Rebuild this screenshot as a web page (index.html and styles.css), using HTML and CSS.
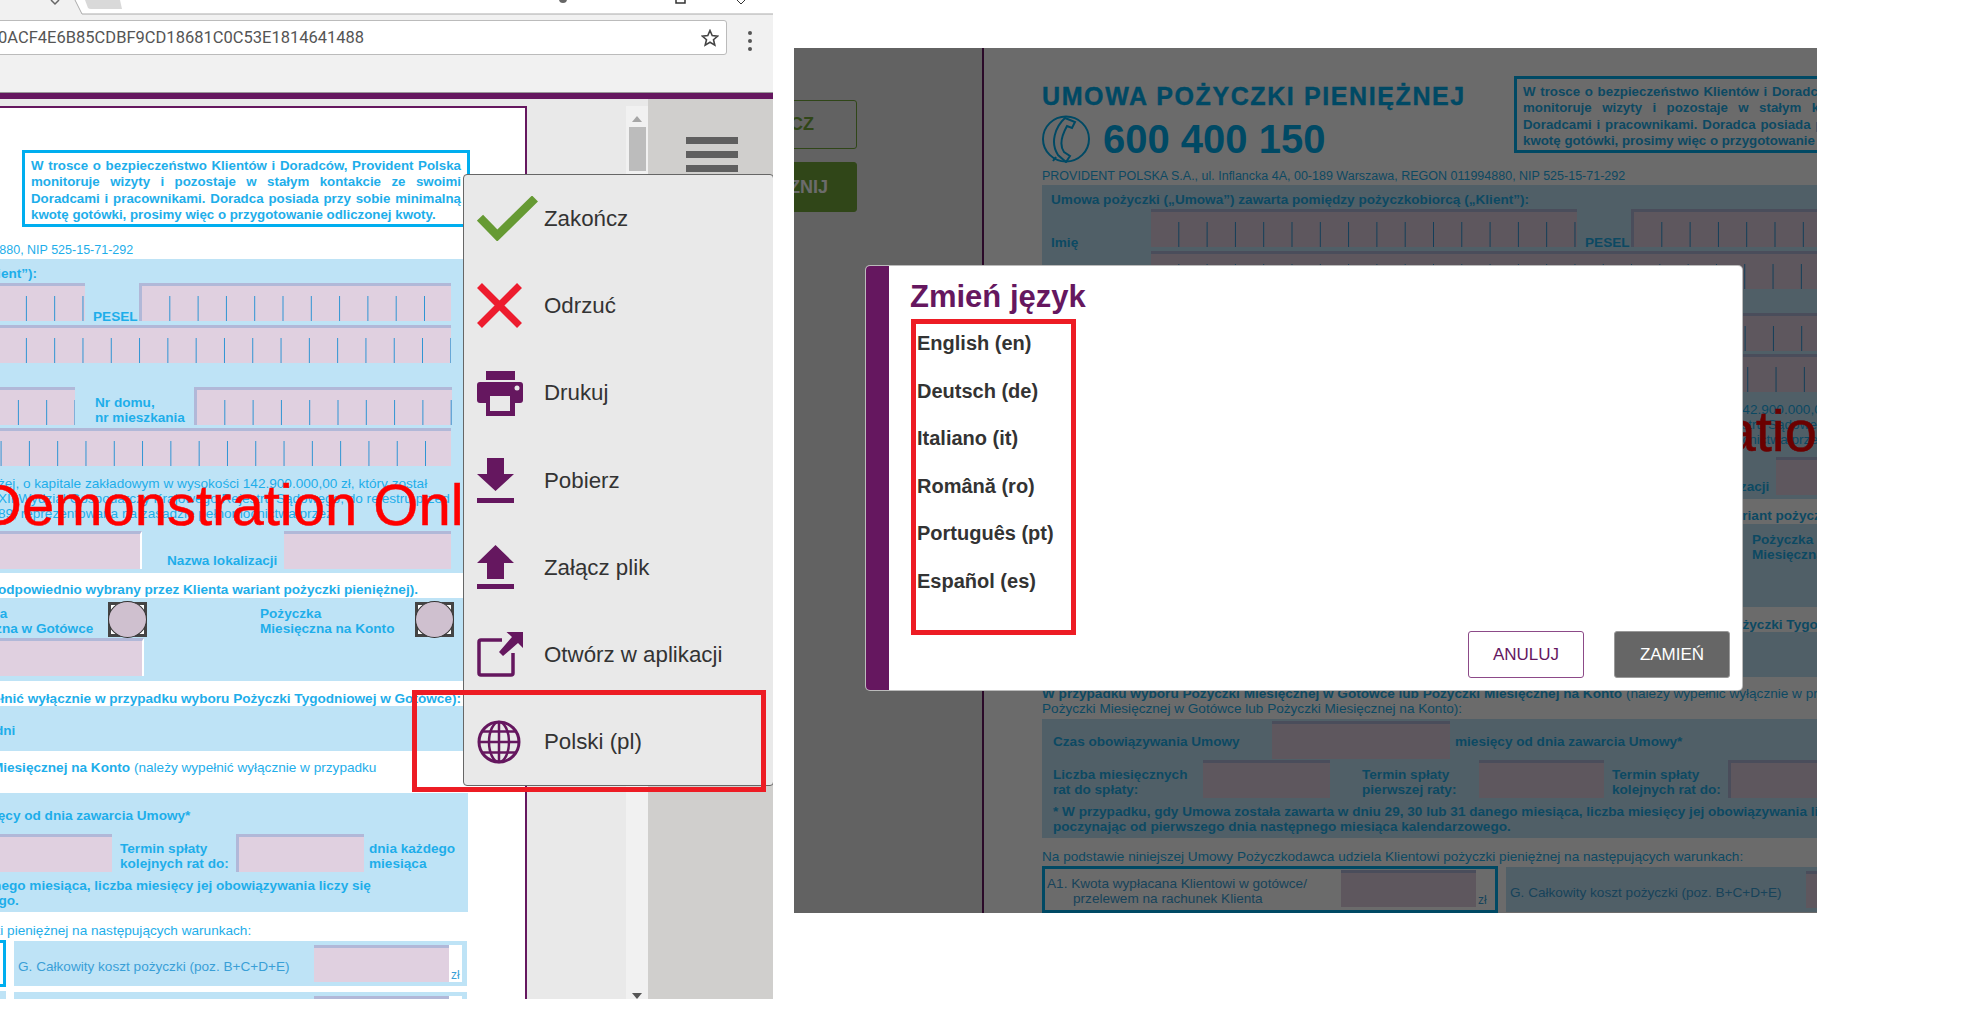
FILE: index.html
```html
<!DOCTYPE html>
<html lang="pl">
  <head>
    <meta charset="UTF-8" />
    <meta name="viewport" content="width=device-width, initial-scale=1.0" />
    <title>Zmień język</title>
    <link rel="stylesheet" href="styles.css">
  </head>

  <body>
    <div class="pane pane-left">
      <svg class="tabstrip" width="773" height="15" viewBox="0 0 773 15">
        <path d="M75 0 L82 14 H773 V0 Z" fill="#fff" />
        <path d="M75 0 L82 14 H773" fill="none" stroke="#aaa" />
        <path d="M85 0 L88 8 Q89 9 91 9 H122 L120 0 Z" fill="#d9d9d9" />
        <path d="M51 0 L55 4 L59 0" fill="none" stroke="#666" stroke-width="1.5" />
        <circle cx="563" cy="-1" r="4" fill="#666" />
        <path d="M676 0 V3 H685 V0" fill="none" stroke="#333" stroke-width="1.5" />
        <path d="M737 0 L741 4 L745 0" fill="none" stroke="#333" />
      </svg>
      <div class="toolbar">
        <div class="address">
          <span class="url">0ACF4E6B85CDBF9CD18681C0C53E1814641488</span>
          <svg class="star" width="18" height="18" viewBox="0 0 18 18">
            <path d="M9 1.5 L11.2 6.6 L16.7 7.1 L12.5 10.7 L13.8 16.1 L9 13.3 L4.2 16.1 L5.5 10.7 L1.3 7.1 L6.8 6.6 Z" fill="none" stroke="#444" stroke-width="1.6" />
          </svg>
        </div>
        <div class="dots"><i></i><i></i><i></i></div>
      </div>
      <div class="stage">
        <div class="viewer">
          <div class="sidebar">
            <button class="side-btn">ZAKOŃCZ</button>
            <button class="side-btn side-btn-solid">ROZPOCZNIJ</button>
          </div>
          <div class="paper">
            <div class="doc-head">
              <div class="doc-brand">
                <h1 class="doc-title">UMOWA POŻYCZKI PIENIĘŻNEJ</h1>
                <div class="doc-phone">
                  <svg width="48" height="48" viewBox="0 0 48 48">
                    <ellipse cx="24" cy="24" rx="23" ry="22.5" fill="none" stroke="#00aeef" stroke-width="2" />
                    <path d="M23 3 L33 7 L30 13 L25 11 C20 20 17 30 22 37 L28 41 L24 47 L16 40 C8 28 13 12 23 3 Z" fill="none" stroke="#00aeef" stroke-width="2" />
                    <path d="M14 42 L11 46" stroke="#00aeef" stroke-width="2" />
                  </svg>
                  <span>600 400 150</span>
                </div>
              </div>
              <div class="notice">
                <span class="jl">W trosce o bezpieczeństwo Klientów i Doradców, Provident Polska</span>
                <span class="jl">monitoruje wizyty i pozostaje w stałym kontakcie ze swoimi</span>
                <span class="jl">Doradcami i pracownikami. Doradca posiada przy sobie minimalną</span>
                <span>kwotę gotówki, prosimy więc o przygotowanie odliczonej kwoty.</span>
              </div>
            </div>
            <p class="address-line">PROVIDENT POLSKA S.A., ul. Inflancka 4A, 00-189 Warszawa, REGON 011994880, NIP 525-15-71-292</p>

            <div class="block block-parties">
              <p class="b block-title">Umowa pożyczki („Umowa”) zawarta pomiędzy pożyczkobiorcą („Klient”):</p>
              <div class="row row-1">
                <span class="b lbl w-imie">Imię</span>
                <div class="field ticks w-imie-f"></div>
                <span class="b lbl w-pesel">PESEL</span>
                <div class="field ticks bordered w-pesel-f"></div>
              </div>
              <div class="row row-2">
                <div class="field ticks w-full"></div>
              </div>
              <div class="row row-3">
                <div class="field ticks w-street"></div>
                <span class="b lbl2 w-nr">Nr domu,<br>nr mieszkania</span>
                <div class="field ticks bordered w-nr-f"></div>
              </div>
              <div class="row row-4">
                <div class="field ticks shift w-full"></div>
              </div>
              <p class="para para-company">
                <span>żej, o kapitale zakładowym w wysokości 142.900.000,00 zł, który został</span>
                <span>XII Wydział Gospodarczy Krajowego Rejestru Sądowego, do rejestru przed</span>
                <span>89, reprezentowana na zasadzie pełnomocnictwa przez</span>
              </p>
              <div class="row row-5">
                <div class="field w-place"></div>
                <span class="b lbl w-place-l">Nazwa lokalizacji</span>
                <div class="field w-place-f"></div>
              </div>
            </div>

            <p class="b band band-choice">odpowiednio wybrany przez Klienta wariant pożyczki pieniężnej).</p>

            <div class="block block-choice">
              <div class="choice-row">
                <span class="b lbl2 w-loan1">Pożyczka<br>Miesięczna w Gotówce</span>
                <div class="check"><i></i></div>
                <span class="b lbl2 w-loan2">Pożyczka<br>Miesięczna na Konto</span>
                <div class="check"><i></i></div>
              </div>
              <div class="field w-amount"></div>
            </div>

            <p class="b band band-weekly">Należy wypełnić wyłącznie w przypadku wyboru Pożyczki Tygodniowej w Gotówce):</p>
            <div class="block block-weekly"><span class="b">dni</span></div>

            <div class="monthly-note">
              <p><b>W przypadku wyboru Pożyczki Miesięcznej w Gotówce lub Pożyczki Miesięcznej na Konto</b> (należy wypełnić wyłącznie w przypadku</p>
              <p>Pożyczki Miesięcznej w Gotówce lub Pożyczki Miesięcznej na Konto):</p>
            </div>

            <div class="block block-monthly">
              <div class="row row-term">
                <span class="b lbl-c w-term">Czas obowiązywania Umowy</span>
                <div class="field w-term-f"></div>
                <span class="b lbl-c">miesięcy od dnia zawarcia Umowy*</span>
              </div>
              <div class="row row-rates">
                <span class="b lbl2 w-rates">Liczba miesięcznych<br>rat do spłaty:</span>
                <div class="field w-rates-f"></div>
                <span class="b lbl2 w-first">Termin spłaty<br>pierwszej raty:</span>
                <div class="field w-first-f"></div>
                <span class="b lbl2 w-next">Termin spłaty<br>kolejnych rat do:</span>
                <div class="field bordered w-next-f"></div>
                <span class="b lbl2">dnia każdego<br>miesiąca</span>
              </div>
              <p class="b footnote">* W przypadku, gdy Umowa została zawarta w dniu 29, 30 lub 31 danego miesiąca, liczba miesięcy jej obowiązywania liczy się<br>poczynając od pierwszego dnia następnego miesiąca kalendarzowego.</p>
            </div>

            <p class="terms-intro">Na podstawie niniejszej Umowy Pożyczkodawca udziela Klientowi pożyczki pieniężnej na następujących warunkach:</p>

            <div class="terms-row">
              <div class="term term-main">
                <p class="term-text">A1. Kwota wypłacana Klientowi w gotówce/<br><span class="term-indent">przelewem na rachunek Klienta</span></p>
                <div class="money"><div class="field"></div><span>zł</span></div>
              </div>
              <div class="term term-g">
                <p class="term-text">G. Całkowity koszt pożyczki (poz. B+C+D+E)</p>
                <div class="money"><div class="field"></div><span>zł</span></div>
              </div>
            </div>
            <div class="terms-row">
              <div class="term term-plain"></div>
              <div class="term term-g">
                <div class="money"><div class="field"></div><span>zł</span></div>
              </div>
            </div>

            <div class="watermark">Demonstration Only</div>
          </div>
          <div class="gutter"></div>
          <div class="scrollbar">
            <i class="arrow-up"></i>
            <div class="thumb"></div>
            <i class="arrow-down"></i>
          </div>
          <div class="sidepanel">
            <div class="burger"><i></i><i></i><i></i></div>
          </div>
        </div>
      </div>

      <ul class="menu">
        <li>
          <span class="menu-icon">
            <svg width="61" height="45" viewBox="0 0 61 45"><path d="M3 21.7 L20.3 39.5 L58 2.5" fill="none" stroke="#669a33" stroke-width="8.5" /></svg>
          </span>
          Zakończ
        </li>
        <li>
          <span class="menu-icon">
            <svg width="45" height="45" viewBox="0 0 45 45"><path d="M2.5 2.5 L42.5 42.5 M42.5 2.5 L2.5 42.5" fill="none" stroke="#ed1c2e" stroke-width="7" /></svg>
          </span>
          Odrzuć
        </li>
        <li>
          <span class="menu-icon">
            <svg width="46" height="45" viewBox="0 0 46 45">
              <rect x="9" y="0" width="29" height="9" fill="#65175f" />
              <rect x="0" y="11" width="46" height="21" rx="3" fill="#65175f" />
              <rect x="9" y="25" width="29" height="20" fill="#65175f" />
              <rect x="13" y="25" width="20" height="15" fill="#e9e9e9" />
              <circle cx="40" cy="17" r="2.5" fill="#e9e9e9" />
            </svg>
          </span>
          Drukuj
        </li>
        <li>
          <span class="menu-icon">
            <svg width="37" height="45" viewBox="0 0 37 45">
              <path d="M10 0 H27 V16 H37 L18.5 33 L0 16 H10 Z" fill="#65175f" />
              <rect x="0" y="40" width="37" height="5" fill="#65175f" />
            </svg>
          </span>
          Pobierz
        </li>
        <li>
          <span class="menu-icon">
            <svg width="37" height="45" viewBox="0 0 37 45">
              <path d="M18.5 0 L37 18 H27 V34 H10 V18 H0 Z" fill="#65175f" />
              <rect x="0" y="39" width="37" height="5" fill="#65175f" />
            </svg>
          </span>
          Załącz plik
        </li>
        <li>
          <span class="menu-icon">
            <svg width="46" height="46" viewBox="0 0 46 46">
              <path d="M25 8 H4 Q2 8 2 10 V41 Q2 43 4 43 H34 Q36 43 36 41 V21" fill="none" stroke="#65175f" stroke-width="3.5" />
              <path d="M29.5 0 H46 V16 L41 11 L26 24 L22 20 L35 5 Z" fill="#65175f" />
            </svg>
          </span>
          Otwórz w aplikacji
        </li>
        <li>
          <span class="menu-icon">
            <svg width="44" height="44" viewBox="0 0 44 44">
              <g fill="none" stroke="#65175f">
                <circle cx="22" cy="22" r="20" stroke-width="3" />
                <ellipse cx="22" cy="22" rx="10" ry="20" stroke-width="2.5" />
                <path d="M22 2 V42 M5 11.5 H39 M2 22 H42 M5 32.5 H39" stroke-width="2.5" />
              </g>
            </svg>
          </span>
          Polski (pl)
        </li>
      </ul>
      <div class="mark mark-lang"></div>
    </div>

    <div class="pane pane-right">
      <div class="dim"></div>
      <div class="modal">
        <div class="modal-strip"></div>
        <div class="modal-body">
          <h2 class="modal-title">Zmień język</h2>
          <ul class="lang-list">
            <li>English (en)</li>
            <li>Deutsch (de)</li>
            <li>Italiano (it)</li>
            <li>Română (ro)</li>
            <li>Português (pt)</li>
            <li>Español (es)</li>
          </ul>
          <div class="modal-actions">
            <button class="btn btn-cancel">ANULUJ</button>
            <button class="btn btn-ok">ZAMIEŃ</button>
          </div>
          <div class="mark mark-list"></div>
        </div>
      </div>
    </div>

    <script src="page.js"></script>
  </body>
</html>
```

FILE: styles.css
```css
* {
  box-sizing: border-box;
}

body {
  margin: 0;
  display: flex;
  gap: 21px;
  height: 1026px;
  overflow: hidden;
  background: #fff;
  font-family: "Liberation Sans", Arial, sans-serif;
  color: #333;
}

p,
h1,
h2,
ul {
  margin: 0;
  padding: 0;
}

.pane {
  position: relative;
  overflow: hidden;
  flex: none;
}

.pane-left {
  width: 773px;
  height: 999px;
  display: flex;
  flex-direction: column;
}

.pane-right {
  width: 1023px;
  height: 865px;
  margin-top: 48px;
}

.pane-right .viewer {
  margin-top: -23px;
}

.pane-left .viewer {
  margin-left: -698px;
}

/* browser chrome */
.tabstrip {
  display: block;
  flex: none;
  background: #f1f1f1;
}

.toolbar {
  flex: none;
  height: 78px;
  display: flex;
  align-items: flex-start;
  padding-top: 5px;
  background: #f1f1f1;
  border-bottom: 1px solid #999;
}

.address {
  flex: none;
  width: 730px;
  height: 35px;
  margin-left: -3px;
  padding: 0 7px 0 0;
  display: flex;
  align-items: center;
  justify-content: space-between;
  background: #fff;
  border: 1px solid #bbb;
  border-radius: 3px;
  overflow: hidden;
}

.url {
  font-family: Roboto, sans-serif;
  font-size: 16.5px;
  color: #555;
}

.star {
  flex: none;
}

.dots {
  display: flex;
  flex-direction: column;
  gap: 4px;
  margin: 11px 0 0 21px;
}

.dots i {
  width: 4px;
  height: 4px;
  border-radius: 50%;
  background: #555;
}

.stage {
  flex: none;
  height: 906px;
  border-top: 6px solid #65175f;
  background: #e9e9e9;
  overflow: hidden;
}

/* the page inside both screens */
.viewer {
  display: flex;
  width: 1471px;
  height: 900px;
}

.sidebar {
  flex: none;
  width: 188px;
  padding: 75px 125px 0 0;
  display: flex;
  flex-direction: column;
  align-items: flex-end;
  gap: 13px;
  background: #e9e9e9;
}

.side-btn {
  flex: none;
  width: 174px;
  height: 49px;
  border: 1px solid #74a83a;
  border-radius: 3px;
  background: #e9e9e9;
  color: #74a83a;
  font: bold 18px "Liberation Sans", Arial, sans-serif;
}

.side-btn-solid {
  height: 50px;
  background: #74a83a;
  color: #fff;
}

.paper {
  flex: none;
  position: relative;
  width: 1037px;
  height: 893px;
  margin-top: 7px;
  padding: 42px 0 0 58px;
  overflow: hidden;
  background: #fff;
  border: solid #65175f;
  border-width: 2px 2px 0 2px;
  font-size: 13.6px;
  line-height: 15px;
  color: #1eaeea;
}

.b {
  font-weight: bold;
}

.gutter {
  flex: none;
  width: 99px;
  background: #e9e9e9;
}

.scrollbar {
  flex: none;
  width: 22px;
  margin-top: 7px;
  padding: 0 3px;
  display: flex;
  flex-direction: column;
  align-items: center;
  background: #f1f1f1;
}

.arrow-up,
.arrow-down {
  width: 0;
  height: 0;
  border-left: 5px solid transparent;
  border-right: 5px solid transparent;
}

.arrow-up {
  margin-top: 10px;
  border-bottom: 6px solid #a6a6a6;
}

.arrow-down {
  margin-top: auto;
  margin-bottom: 0;
  border-top: 6px solid #555;
}

.thumb {
  width: 17px;
  height: 44px;
  margin-top: 5px;
  background: #bcbcbc;
}

.sidepanel {
  flex: none;
  width: 125px;
  background: #d0cfcd;
  padding: 38px 35px 0 38px;
}

.burger {
  display: flex;
  flex-direction: column;
  gap: 7.5px;
}

.burger i {
  height: 6.5px;
  background: #5f5f5f;
}

/* document */
.doc-head {
  display: flex;
  height: 86px;
}

.doc-brand {
  flex: none;
  width: 472px;
  padding-top: 6px;
}

.doc-title {
  font-size: 25px;
  line-height: 28px;
  letter-spacing: 1.6px;
  white-space: nowrap;
  color: #00aeef;
  -webkit-text-stroke: 0.4px #00aeef;
}

.doc-phone {
  display: flex;
  align-items: center;
  gap: 13px;
  margin-top: 5px;
  font-size: 40px;
  line-height: 48px;
  font-weight: bold;
  color: #00aeef;
}

.notice {
  flex: none;
  width: 448px;
  height: 77px;
  padding: 5px 6px 0 6px;
  border: 3px solid #00aeef;
  font-weight: bold;
  font-size: 13.3px;
  line-height: 16.3px;
  white-space: nowrap;
}

.notice span {
  display: block;
}

.notice .jl {
  text-align: justify;
  text-align-last: justify;
  white-space: normal;
}

.address-line {
  margin-top: 7px;
  height: 16px;
  font-size: 12.5px;
  white-space: nowrap;
}

.block {
  width: 918px;
  background: #bee3f6;
}

.block-parties {
  height: 314px;
  padding: 7px 0 0 0;
}

.block-title {
  padding-left: 9px;
}

.row {
  display: flex;
}

.field {
  flex: none;
  height: 38px;
  background-color: #e0d0e0;
  border-top: 3px solid #b1b8d8;
}

.bordered {
  border-left: 3px solid #b1b8d8;
}

.ticks {
  background-image: linear-gradient(to right, transparent 27.3px, #2b93d3 27.3px);
  background-size: 28.3px 25px;
  background-position: left bottom;
  background-repeat: repeat-x;
}

.shift {
  background-position: 3px bottom;
}

.lbl {
  align-self: flex-end;
  margin-bottom: -3px;
  white-space: nowrap;
}

.lbl2 {
  white-space: nowrap;
}

.lbl-c {
  align-self: center;
  padding-top: 3px;
  white-space: nowrap;
}

.row-1 {
  margin-top: 2px;
  padding-left: 9px;
}

.w-imie {
  width: 100px;
}

.w-imie-f {
  width: 426px;
}

.w-pesel {
  width: 54px;
  padding-left: 8px;
}

.w-pesel-f {
  width: 312px;
}

.row-2 {
  margin-top: 4px;
  padding-left: 109px;
}

.w-full {
  width: 792px;
}

.row-3 {
  margin-top: 24px;
  padding-left: 109px;
  align-items: center;
}

.w-street {
  width: 416px;
  background-position: -8px bottom;
}

.w-nr {
  width: 119px;
  padding: 8px 0 0 20px;
}

.w-nr-f {
  width: 258px;
}

.row-4 {
  margin-top: 3px;
  padding-left: 109px;
}

.para {
  margin-top: 10px;
  padding-left: 448px;
  white-space: nowrap;
}

.para span {
  display: block;
}

.row-5 {
  margin-top: 10px;
  padding-left: 109px;
}

.w-place {
  width: 483px;
  border-right: 2px solid #fff;
}

.w-place-l {
  width: 142px;
  margin-bottom: 0;
  padding-left: 25px;
  padding-bottom: 1px;
}

.w-place-f {
  width: 167px;
}

.band {
  white-space: nowrap;
}

.band-choice {
  height: 25px;
  padding: 9px 0 0 448px;
}

.block-choice {
  height: 83px;
  padding-top: 4px;
}

.choice-row {
  display: flex;
  align-items: center;
  height: 35px;
}

.choice-row .lbl2 {
  padding-top: 2px;
}

.w-loan1 {
  width: 558px;
  padding-left: 396px;
}

.w-loan2 {
  width: 155px;
  margin-left: 113px;
}

.check {
  flex: none;
  width: 39px;
  height: 35px;
  position: relative;
  background: #fff;
  border: 3px solid #444;
}

.check i {
  display: block;
  width: 39px;
  height: 37px;
  margin: -4px 0 0 -3px;
  background: #cfc0cf;
  border: 1px solid #333;
  border-radius: 50%;
}

.w-amount {
  width: 485px;
  margin: 1px 0 0 109px;
  border-right: 2px solid #fff;
}

.band-weekly {
  height: 25px;
  padding: 10px 7px 0 0;
  width: 918px;
  text-align: right;
}

.block-weekly {
  height: 45px;
  padding-left: 445px;
  line-height: 49px;
}

.monthly-note {
  height: 42px;
  padding-top: 9px;
  white-space: nowrap;
}

.block-monthly {
  height: 119px;
  padding: 2px 0 0 11px;
}

.row-term {
  height: 38px;
}

.w-term {
  width: 219px;
}

.w-term-f {
  width: 178px;
  margin-right: 5px;
}

.row-rates {
  height: 40px;
  align-items: center;
}

.row-rates .lbl2 {
  padding-top: 5px;
}

.w-rates {
  width: 150px;
}

.w-rates-f {
  width: 127px;
  margin-right: 32px;
}

.w-first {
  width: 117px;
}

.w-first-f {
  width: 125px;
  margin-right: 8px;
}

.w-next {
  width: 116px;
}

.w-next-f {
  width: 128px;
  margin-right: 5px;
}

.footnote {
  margin-top: 5px;
  white-space: nowrap;
}

.terms-intro {
  height: 28px;
  padding-top: 11px;
  white-space: nowrap;
}

.terms-row {
  display: flex;
  gap: 8px;
  align-items: flex-start;
  margin-bottom: 4px;
}

.term {
  flex: none;
  display: flex;
  justify-content: space-between;
  height: 45px;
  background: #bee3f6;
}

.term-main {
  width: 456px;
  height: 47px;
  padding: 1px 6px 0 5px;
  background: #fff;
  border: 3px solid #00aeef;
  color: #3a9fd6;
}

.term-plain {
  width: 456px;
}

.term-g {
  width: 453px;
  margin-top: 1px;
  padding: 4px 5px 0 4px;
  justify-content: flex-start;
  color: #3a9fd6;
}

.term-main .term-text {
  padding-top: 6px;
  margin-left: -3px;
  white-space: nowrap;
}

.term-indent {
  padding-left: 26px;
}

.term-g .term-text {
  width: 294px;
  padding-top: 14px;
  white-space: nowrap;
}

.term-g .money {
  margin-left: auto;
}

.money {
  flex: none;
  display: flex;
  width: 148px;
  height: 37px;
  padding-right: 2px;
  align-items: flex-end;
  background: #fff;
}

.money .field {
  width: 135px;
  height: 37px;
}

.money span {
  padding-left: 2px;
  font-size: 12px;
  line-height: 14px;
}

.watermark {
  position: absolute;
  left: 488px;
  top: 365px;
  font-size: 58px;
  line-height: 64px;
  white-space: nowrap;
  color: #f00;
  -webkit-text-stroke: 0.5px #f00;
}

/* left screen: menu */
.menu {
  position: absolute;
  left: 463px;
  top: 174px;
  width: 311px;
  height: 612px;
  list-style: none;
  background: #e9e9e9;
  border: 1px solid #666;
  border-radius: 4px;
}

.menu li {
  display: flex;
  align-items: center;
  height: 87.3px;
  padding-left: 13px;
  font-size: 22.3px;
  color: #333;
}

.menu-icon {
  flex: none;
  width: 67px;
  display: flex;
}

.mark {
  position: absolute;
  border: 5px solid #ed1c24;
  pointer-events: none;
}

.mark-lang {
  left: 412px;
  top: 690px;
  width: 354px;
  height: 102px;
}

/* right screen: dialog */
.dim {
  position: absolute;
  inset: 0;
  background: rgba(0, 0, 0, 0.58);
}

.modal {
  position: absolute;
  left: 72px;
  top: 218px;
  width: 876px;
  height: 424px;
  display: flex;
  background: #fff;
  border-radius: 4px;
  box-shadow: 0 0 0 1px #bbb;
  overflow: hidden;
}

.modal-strip {
  flex: none;
  width: 23px;
  background: #65175f;
}

.modal-body {
  flex: 1;
  padding: 13px 12px 0 21px;
}

.modal-title {
  font-size: 31px;
  line-height: 36px;
  color: #65175f;
}

.lang-list {
  margin-top: 5px;
  padding-left: 7px;
  list-style: none;
}

.lang-list li {
  height: 47.5px;
  line-height: 47.5px;
  font-size: 20px;
  font-weight: bold;
  color: #333;
}

.modal-actions {
  display: flex;
  justify-content: flex-end;
  gap: 30px;
  margin-top: 26px;
}

.btn {
  width: 116px;
  height: 47px;
  border-radius: 3px;
  font: 17px "Liberation Sans", Arial, sans-serif;
}

.btn-cancel {
  background: #fff;
  border: 1px solid #8c4a88;
  color: #65175f;
}

.btn-ok {
  background: #666;
  border: 1px solid #999;
  color: #fff;
}

.mark-list {
  left: 45px;
  top: 53px;
  width: 165px;
  height: 316px;
}
```

FILE: page.js
```js
// both screens show the same page, only scrolled differently
const page = document.querySelector(".viewer");
document.querySelector(".pane-right").prepend(page.cloneNode(true));
```
